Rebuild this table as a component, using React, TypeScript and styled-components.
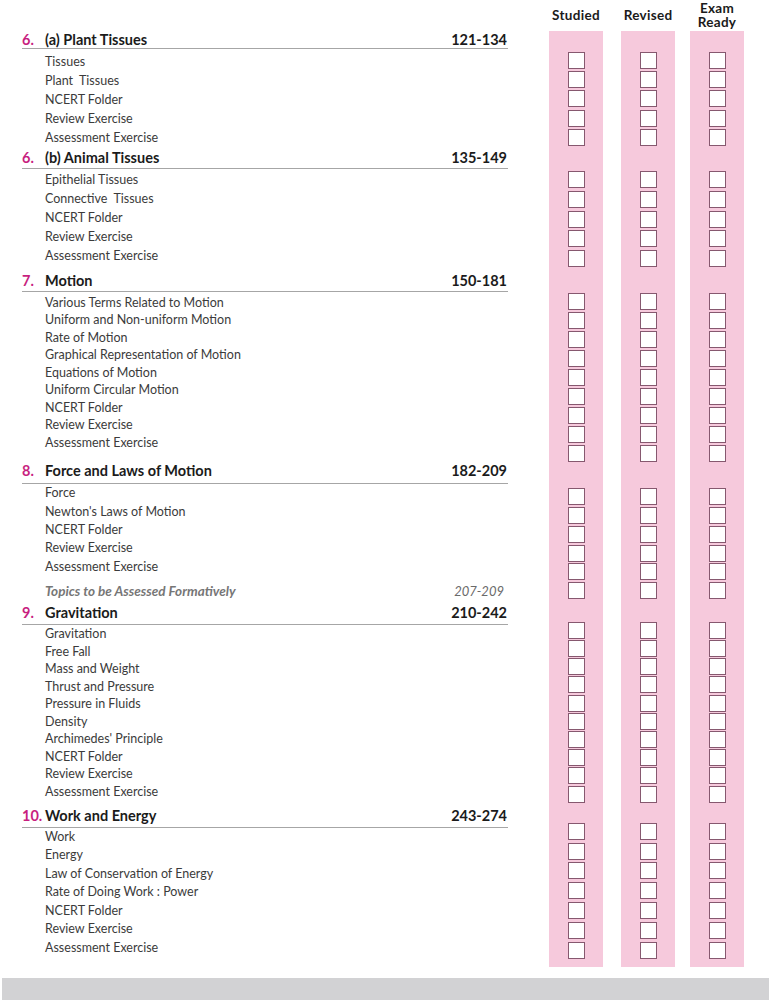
import React from 'react';
import styled, { createGlobalStyle } from 'styled-components';

const GlobalStyle = createGlobalStyle`
  html, body { margin: 0; padding: 0; background: #ffffff; }
  body { font-family: Lato, "Noto Sans", Arial, sans-serif; }
`;

type Section = {
  num: string;
  title: string;
  pages: string;
  mt: number;
  hp: number;
  ip: number;
  pitch: number;
  items: string[];
  formative?: { title: string; pages: string; mt: number };
};

const sections: Section[] = [
  {
    num: '6.', title: '(a) Plant Tissues', pages: '121-134', mt: 0, hp: 0.4, ip: 3, pitch: 19,
    items: ['Tissues', 'Plant  Tissues', 'NCERT Folder', 'Review Exercise', 'Assessment Exercise'],
  },
  {
    num: '6.', title: '(b) Animal Tissues', pages: '135-149', mt: 2.3, hp: 2.4, ip: 1.2, pitch: 19,
    items: ['Epithelial Tissues', 'Connective  Tissues', 'NCERT Folder', 'Review Exercise', 'Assessment Exercise'],
  },
  {
    num: '7.', title: 'Motion', pages: '150-181', mt: 7.4, hp: 2.4, ip: 1.9, pitch: 17.5,
    items: [
      'Various Terms Related to Motion', 'Uniform and Non-uniform Motion', 'Rate of Motion',
      'Graphical Representation of Motion', 'Equations of Motion', 'Uniform Circular Motion',
      'NCERT Folder', 'Review Exercise', 'Assessment Exercise',
    ],
  },
  {
    num: '8.', title: 'Force and Laws of Motion', pages: '182-209', mt: 11.9, hp: 4, ip: 0, pitch: 18.3,
    items: ['Force', "Newton's Laws of Motion", 'NCERT Folder', 'Review Exercise', 'Assessment Exercise'],
    formative: { title: 'Topics to be Assessed Formatively', pages: '207-209', mt: 5.7 },
  },
  {
    num: '9.', title: 'Gravitation', pages: '210-242', mt: 5.8, hp: 2.7, ip: 0, pitch: 17.55,
    items: [
      'Gravitation', 'Free Fall', 'Mass and Weight', 'Thrust and Pressure', 'Pressure in Fluids',
      'Density', "Archimedes' Principle", 'NCERT Folder', 'Review Exercise', 'Assessment Exercise',
    ],
  },
  {
    num: '10.', title: 'Work and Energy', pages: '243-274', mt: 7.1, hp: 3.4, ip: 0, pitch: 18.5,
    items: [
      'Work', 'Energy', 'Law of Conservation of Energy', 'Rate of Doing Work : Power',
      'NCERT Folder', 'Review Exercise', 'Assessment Exercise',
    ],
  },
];

const boxGroups = [
  { count: 5, mt: 21, gap: 2.2 },
  { count: 5, mt: 25.2, gap: 2.8 },
  { count: 9, mt: 25.8, gap: 2.0 },
  { count: 6, mt: 26, gap: 1.9 },
  { count: 10, mt: 22.5, gap: 1.2 },
  { count: 7, mt: 20.2, gap: 2.8 },
];

const tracks = [
  { label: ['Studied'], ml: 0 },
  { label: ['Revised'], ml: 18 },
  { label: ['Exam', 'Ready'], ml: 15 },
];

const Page = styled.div`
  width: 771px;
  height: 1000px;
  overflow: hidden;
  display: flex;
  flex-direction: column;
`;

const Body = styled.div`
  display: flex;
  align-items: flex-start;
  height: 967px;
`;

const Contents = styled.div`
  width: 486px;
  margin-left: 22px;
  padding-top: 32px;
`;

const Block = styled.section<{ $mt: number }>`
  margin-top: ${(p) => p.$mt}px;
`;

const Heading = styled.div<{ $pb: number }>`
  display: flex;
  align-items: baseline;
  font-size: 14.5px;
  font-weight: 700;
  line-height: 16px;
  color: #1b1b1b;
  padding-bottom: ${(p) => p.$pb}px;
  border-bottom: 1px solid #a6a6a6;
`;

const Num = styled.span`
  flex: none;
  width: 23px;
  color: #c81f7f;
`;

const Title = styled.span`
  flex: 1;
`;

const Pages = styled.span`
  flex: none;
  padding-right: 1px;
`;

const Items = styled.ul<{ $pt: number; $lh: number }>`
  list-style: none;
  margin: 0;
  padding: ${(p) => p.$pt}px 0 0 23px;
  font-size: 12.5px;
  line-height: ${(p) => p.$lh}px;
  color: #3b3b3b;
`;

const Item = styled.li`
  white-space: pre;
`;

const Formative = styled.div<{ $mt: number }>`
  display: flex;
  justify-content: space-between;
  align-items: baseline;
  margin-top: ${(p) => p.$mt}px;
  padding: 0 4px 0 23px;
  font-size: 13.5px;
  line-height: 18px;
  font-style: italic;
  color: #767676;
`;

const FormativeTitle = styled.span`
  font-weight: 700;
`;

const FormativePages = styled.span`
  font-weight: 400;
  font-size: 13px;
  color: #6a6a6a;
`;

const Tracks = styled.div`
  display: flex;
  margin-left: 41px;
`;

const Track = styled.div<{ $ml: number }>`
  width: 54px;
  margin-left: ${(p) => p.$ml}px;
  display: flex;
  flex-direction: column;
`;

const TrackLabel = styled.div`
  height: 29px;
  padding-bottom: 2px;
  display: flex;
  flex-direction: column;
  align-items: center;
  justify-content: center;
  font-size: 13.5px;
  letter-spacing: 0.3px;
  font-weight: 700;
  line-height: 14px;
  color: #1b1b1b;
  white-space: nowrap;
`;

const Strip = styled.div`
  height: 936px;
  background: #f6c9dc;
  display: flex;
  flex-direction: column;
  align-items: center;
`;

const BoxGroup = styled.div<{ $mt: number; $gap: number }>`
  display: flex;
  flex-direction: column;
  margin-top: ${(p) => p.$mt}px;
  gap: ${(p) => p.$gap}px;
`;

const Box = styled.div`
  width: 17px;
  height: 17px;
  box-sizing: border-box;
  border: 1px solid #86586f;
  background: #ffffff;
`;

const Footer = styled.div`
  margin: 11px 2px 0;
  height: 22px;
  background: #d2d2d4;
`;

export default function App() {
  return (
    <Page>
      <GlobalStyle />
      <Body>
        <Contents>
          {sections.map((s, i) => (
            <Block key={i} $mt={s.mt}>
              <Heading $pb={s.hp}>
                <Num>{s.num}</Num>
                <Title>{s.title}</Title>
                <Pages>{s.pages}</Pages>
              </Heading>
              <Items $pt={s.ip} $lh={s.pitch}>
                {s.items.map((it, j) => (
                  <Item key={j}>{it}</Item>
                ))}
              </Items>
              {s.formative && (
                <Formative $mt={s.formative.mt}>
                  <FormativeTitle>{s.formative.title}</FormativeTitle>
                  <FormativePages>{s.formative.pages}</FormativePages>
                </Formative>
              )}
            </Block>
          ))}
        </Contents>
        <Tracks>
          {tracks.map((t, i) => (
            <Track key={i} $ml={t.ml}>
              <TrackLabel>
                {t.label.map((l) => (
                  <span key={l}>{l}</span>
                ))}
              </TrackLabel>
              <Strip>
                {boxGroups.map((g, gi) => (
                  <BoxGroup key={gi} $mt={g.mt} $gap={g.gap}>
                    {Array.from({ length: g.count }).map((_, bi) => (
                      <Box key={bi} />
                    ))}
                  </BoxGroup>
                ))}
              </Strip>
            </Track>
          ))}
        </Tracks>
      </Body>
      <Footer />
    </Page>
  );
}
